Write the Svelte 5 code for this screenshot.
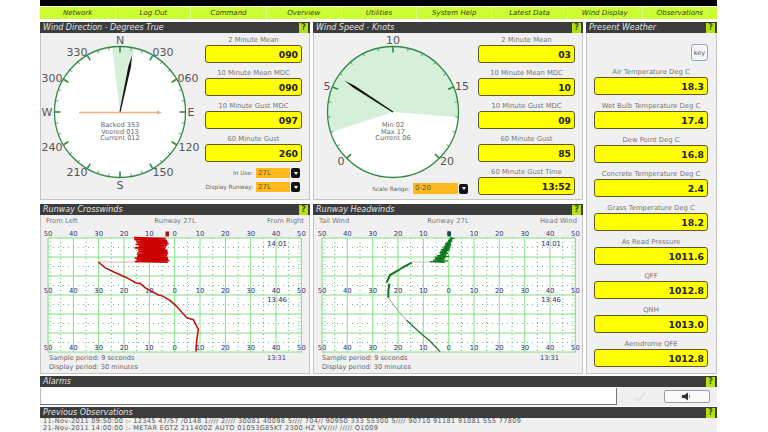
<script>
  const navItems = ['Network', 'Log Out', 'Command', 'Overview', 'Utilities', 'System Help', 'Latest Data', 'Wind Display', 'Observations'];

  const dirFields = [
    ['2 Minute Mean', '090'],
    ['10 Minute Mean MDC', '090'],
    ['10 Minute Gust MDC', '097'],
    ['60 Minute Gust', '260']
  ];
  const speedFields = [
    ['2 Minute Mean', '03'],
    ['10 Minute Mean MDC', '10'],
    ['10 Minute Gust MDC', '09'],
    ['60 Minute Gust', '85'],
    ['60 Minute Gust Time', '13:52']
  ];
  const weatherFields = [
    ['Air Temperature Deg C', '18.3'],
    ['Wet Bulb Temperature Deg C', '17.4'],
    ['Dew Point Deg C', '16.8'],
    ['Concrete Temperature Deg C', '2.4'],
    ['Grass Temperature Deg C', '18.2'],
    ['As Read Pressure', '1011.6'],
    ['QFF', '1012.8'],
    ['QNH', '1013.0'],
    ['Aerodrome QFE', '1012.8']
  ];

  // gauge centre inside its svg
  const cx = 80;
  const cy = 79;
  const radius = 65.5;

  function polar(deg, r) {
    const a = (deg * Math.PI) / 180;
    return [cx + r * Math.sin(a), cy - r * Math.cos(a)];
  }

  function sector(from, to) {
    const [x1, y1] = polar(from, radius);
    const [x2, y2] = polar(to, radius);
    const sweep = ((to - from + 360) % 360) > 180 ? 1 : 0;
    return `M${cx} ${cy}L${x1} ${y1}A${radius} ${radius} 0 ${sweep} 1 ${x2} ${y2}Z`;
  }

  function needle(deg, len) {
    const tip = polar(deg, len);
    const a = polar(deg + 90, 0.6);
    const b = polar(deg - 90, 0.6);
    const s1 = polar(deg + 1.6, len * 0.8);
    const s2 = polar(deg - 1.6, len * 0.8);
    return [a, s1, tip, s2, b].map((p) => p.join(',')).join(' ');
  }

  function tickLine(deg, major) {
    const [x1, y1] = polar(deg, radius);
    const [x2, y2] = polar(deg, radius - (major ? 6 : 3));
    return { x1, y1, x2, y2, major };
  }

  const dirTicks = Array.from({ length: 36 }, (_, i) => tickLine(i * 10, i % 3 === 0));
  const speedTicks = Array.from({ length: 21 }, (_, i) => tickLine(225 + i * 13.5, i % 5 === 0));

  const dirLabels = [
    ['N', 80, 7], ['030', 123, 19], ['060', 148, 45], ['E', 151, 79], ['120', 149, 114], ['150', 123, 139],
    ['S', 80, 152], ['210', 37, 139], ['240', 12, 114], ['W', 7, 79], ['300', 12, 45], ['330', 37, 19]
  ];
  const speedLabels = [
    ['10', 80, 7], ['15', 149, 53], ['20', 134, 128], ['0', 28, 128], ['5', 14, 53]
  ];

  // chart geometry
  const plotW = 253.4;
  const top = 11;
  const bottom = 125;
  const rows = [0, 1, 2, 3, 4, 5, 6].map((i) => top + i * 19);
  const halfRows = [0, 1, 2, 3, 4, 5].map((i) => top + 9.5 + i * 19);
  const cols = Array.from({ length: 11 }, (_, i) => (i * plotW) / 10);
  const halfCols = Array.from({ length: 10 }, (_, i) => ((i + 0.5) * plotW) / 10);
  const scale = [50, 40, 30, 20, 10, 0, 10, 20, 30, 40, 50];
  const sideTicks = Array.from({ length: 31 }, (_, i) => top + i * 3.8);

  function rnd(i) {
    const v = Math.sin(i * 12.9898) * 43758.5453;
    return v - Math.floor(v);
  }

  // traces are noted in 3x crop coordinates
  function toPlot(points, xShift) {
    return points.map(([x, y]) => `${x / 3 - xShift},${y / 3 - 26}`).join(' ');
  }

  function redBlob() {
    const pts = [];
    for (let i = 0; i < 30; i++) {
      const y = 110 + i * 2.55;
      pts.push(i % 2 ? [418 - rnd(i) * 12, y] : [312 + rnd(i) * 14, y]);
    }
    return pts;
  }

  function greenBlob() {
    const pts = [];
    for (let i = 0; i < 34; i++) {
      const t = i / 33;
      const x = 425 - t * 40;
      const y = 110 + t * 74;
      const w = 4 + t * 16 * rnd(i + 5) + t * 8;
      pts.push([x + (i % 2 ? w : -w), y]);
    }
    return pts;
  }

  const redLine = [[205, 183], [225, 200], [250, 212], [290, 230], [318, 246], [330, 247], [345, 260], [360, 268], [385, 282], [395, 284], [420, 298], [440, 316], [445, 322], [470, 350], [490, 356], [505, 385], [500, 420], [498, 452]];
  const redPale = [[205, 183], [330, 183]];
  const greenPale = [[305, 183], [365, 183]];
  const greenUpper = [[305, 185], [280, 198], [262, 210], [240, 222], [230, 245]];
  const greenMid = [[238, 248], [235, 270], [235, 290]];
  const greenPaleLower = [[235, 290], [265, 330], [290, 358]];
  const greenLower = [[290, 358], [330, 395], [360, 420], [390, 452]];
</script>

{#snippet field(label, value)}
  <div class="field">
    <div class="field-label">{label}</div>
    <div class="field-box">{value}</div>
  </div>
{/snippet}

{#snippet titleBar(title)}
  <div class="title-bar">
    <span>{title}</span>
    <span class="help">?</span>
  </div>
{/snippet}

{#snippet picker(label, value, wide)}
  <div class="picker">
    <span>{label}</span>
    <span class="picker-value" class:wide>{value}</span>
    <span class="picker-btn"><i></i></span>
  </div>
{/snippet}

{#snippet trace(x0)}
  {#if x0 === 8}
    <polyline points={toPlot(redPale, 10)} class="trace" stroke="#e89a9a" stroke-width="0.8" />
    <polyline points={toPlot(redBlob(), 10)} class="trace" stroke="#cc0000" stroke-width="1.6" />
    <polyline points={toPlot(redLine, 10)} class="trace" stroke="#b81414" stroke-width="1.6" />
    <rect x="125.5" y="4.5" width="3.5" height="5" fill="#a01818" />
  {:else}
    <polyline points={toPlot(greenPale, 3)} class="trace" stroke="#a8b8a8" stroke-width="0.8" />
    <polyline points={toPlot(greenBlob(), 3)} class="trace" stroke="#0c7a1c" stroke-width="1.4" />
    <polyline points={toPlot(greenUpper, 3)} class="trace" stroke="#0c7a1c" stroke-width="2" />
    <polyline points={toPlot(greenMid, 3)} class="trace" stroke="#0c7a1c" stroke-width="2" />
    <polyline points={toPlot(greenPaleLower, 3)} class="trace" stroke="#7f9f7f" stroke-width="0.9" />
    <polyline points={toPlot(greenLower, 3)} class="trace" stroke="#1a7a2a" stroke-width="1.3" />
    <rect x="134.5" y="4.5" width="3.5" height="5" fill="#14505a" />
  {/if}
{/snippet}

{#snippet chart(left, mid, right, x0)}
  <div class="chart-head">
    <span>{left}</span><span>{mid}</span><span class="head-right">{right}</span>
  </div>
  <svg class="chart" width="270" height="126" viewBox="0 0 270 126">
    <g transform="translate({x0} 0)">
      <rect x="0" y={top} width={plotW} height={bottom - top} fill="#fff" />
      {#each halfRows as y}
        <line x1="0" x2={plotW} y1={y} y2={y} class="dotted" />
      {/each}
      {#each halfCols as x}
        <line x1={x} x2={x} y1={top} y2={bottom} class="dashed" />
      {/each}
      {#each rows as y}
        <line x1="0" x2={plotW} y1={y} y2={y} class="solid" />
      {/each}
      {#each cols as x}
        <line x1={x} x2={x} y1={top} y2={bottom} class="solid" />
      {/each}
      {#each sideTicks as y}
        <line x1="0" x2="4" y1={y} y2={y} class="tick" />
        <line x1={plotW - 4} x2={plotW} y1={y} y2={y} class="tick" />
      {/each}
      {#each scale as n, i}
        <text x={cols[i]} y="9" class="scale">{n}</text>
        <text x={cols[i]} y="66" class="scale">{n}</text>
        <text x={cols[i]} y="123" class="scale">{n}</text>
      {/each}
      <text x="229" y="19" class="scale">14:01</text>
      <text x="229" y="75" class="scale">13:46</text>
    </g>
    {@render trace(x0)}
  </svg>
  <div class="chart-foot">
    <div>Sample period: 9 seconds<br />Display period: 30 minutes</div>
    <div class="foot-time">13:31</div>
  </div>
{/snippet}

{#snippet gaugeFace(ticks, labels, sectorPath, needleDeg, lines)}
  <circle cx={cx} cy={cy} r={radius} fill="#fff" />
  <path d={sectorPath} fill="#d6efd8" />
  <circle cx={cx} cy={cy} r={radius} fill="none" stroke="#2f8a45" stroke-width="1.3" />
  {#each ticks as t}
    <line x1={t.x1} y1={t.y1} x2={t.x2} y2={t.y2} stroke="#2f8a45" stroke-width={t.major ? 1.6 : 0.8} />
  {/each}
  {#each labels as [text, x, y]}
    <text x={x} y={y + 4} class="dial">{text}</text>
  {/each}
  {#each lines as line, i}
    <text x={cx} y={cy + 15 + i * 6.6} class="dial-info">{line}</text>
  {/each}
  <polygon points={needle(needleDeg, 58)} fill="#141414" />
{/snippet}

<div class="app">
  <div class="top-bar"></div>
  <nav class="nav">
    {#each navItems as item}
      <span>{item}</span>
    {/each}
  </nav>

  <div class="grid">
    <section class="panel">
      {@render titleBar('Wind Direction - Degrees True')}
      <div class="gauge-body">
        <div class="gauge-col">
          <svg width="165" height="168" viewBox="0 0 165 168">
            {@render gaugeFace(dirTicks, dirLabels, sector(353, 13), 12, ['Backed 353', 'Veered 013', 'Current 012'])}
            <line x1={cx - 41} x2={cx + 38} y1={cy + 0.5} y2={cy + 0.5} stroke="#f0b27c" stroke-width="1.5" />
            <polygon points="{cx + 37},{cy - 1.6} {cx + 42},{cy + 0.5} {cx + 37},{cy + 2.6}" fill="#f0b27c" />
          </svg>
        </div>
        <div class="field-col">
          {#each dirFields as [label, value]}
            {@render field(label, value)}
          {/each}
          <div class="pickers">
            {@render picker('In Use:', '27L', false)}
            {@render picker('Display Runway:', '27L', false)}
          </div>
        </div>
      </div>
    </section>

    <section class="panel">
      {@render titleBar('Wind Speed - Knots')}
      <div class="gauge-body">
        <div class="gauge-col">
          <svg width="165" height="149" viewBox="0 0 165 149">
            {@render gaugeFace(speedTicks, speedLabels, sector(252, 94.5), 303, ['Min 02', 'Max 17', 'Current 06'])}
          </svg>
          <div class="scale-range">
            {@render picker('Scale Range:', '0-20', true)}
          </div>
        </div>
        <div class="field-col">
          {#each speedFields as [label, value]}
            {@render field(label, value)}
          {/each}
        </div>
      </div>
    </section>

    <section class="panel weather">
      {@render titleBar('Present Weather')}
      <div class="weather-body">
        <button class="key" type="button">key</button>
        {#each weatherFields as [label, value]}
          {@render field(label, value)}
        {/each}
      </div>
    </section>

    <section class="panel">
      {@render titleBar('Runway Crosswinds')}
      {@render chart('From Left', 'Runway 27L', 'From Right', 8)}
    </section>

    <section class="panel">
      {@render titleBar('Runway Headwinds')}
      {@render chart('Tail Wind', 'Runway 27L', 'Head Wind', 9)}
    </section>
  </div>

  <section class="alarms">
    {@render titleBar('Alarms')}
    <div class="alarm-row">
      <div class="alarm-box"></div>
      <svg class="check" width="14" height="10" viewBox="0 0 14 10">
        <path d="M2 6l3 3 7-8" fill="none" stroke="#e2e2e2" stroke-width="2" />
      </svg>
      <button class="mute" type="button" aria-label="Mute">
        <svg width="12" height="9" viewBox="0 0 12 9">
          <path d="M1 3h2.5L7 .5v8L3.5 6H1z" fill="#333" />
          <path d="M8.5 3v3" stroke="#888" stroke-width="1" />
        </svg>
      </button>
    </div>
  </section>

  <section class="obs">
    {@render titleBar('Previous Observations')}
    <div class="obs-body">
      <div>11-Nov-2011 09:50:00 :- 12345 47/57 /0148 1//// 2//// 30081 40098 5//// 704// 90950 333 55300 5//// 90710 91181 91081 555 77809</div>
      <div>21-Nov-2011 14:00:00 :- METAR EGTZ 211400Z AUTO 01053G85KT 2300 HZ VV//// ///// Q1009</div>
    </div>
  </section>
</div>

<style>
  :global(body) {
    margin: 0;
    background: #fff;
  }

  .app {
    width: 677px;
    height: 432px;
    margin-left: 40px;
    overflow: hidden;
    font-family: "DejaVu Sans", Verdana, sans-serif;
    color: #666;
  }

  .top-bar {
    height: 6px;
    background: #000;
  }

  .nav {
    display: grid;
    grid-template-columns: repeat(9, 1fr);
    height: 12px;
    margin-top: 1px;
    background: #ccff33;
  }

  .nav span {
    border-left: 1px solid #dcff80;
    font-size: 7px;
    font-style: italic;
    line-height: 12px;
    text-align: center;
    color: #334010;
  }

  .nav span:first-child {
    border-left: 0;
  }

  .grid {
    display: grid;
    grid-template-columns: 270px 270px 131px;
    grid-template-rows: 178px 170px;
    column-gap: 3px;
    row-gap: 4px;
    margin-top: 3px;
  }

  .panel {
    box-sizing: border-box;
    display: flex;
    flex-direction: column;
    background: #f0f0f0;
    box-shadow: inset 0 0 0 1px #c4c4c4;
    overflow: hidden;
  }

  .weather {
    grid-column: 3;
    grid-row: 1 / span 2;
  }

  .title-bar {
    flex: none;
    display: flex;
    align-items: center;
    justify-content: space-between;
    height: 11px;
    padding: 0 2px 0 3px;
    background: #3c3c3c;
    color: #e4e4e4;
    font-size: 8px;
    font-style: italic;
  }

  .help {
    width: 9px;
    height: 10px;
    background: #b4e014;
    color: #3c5000;
    font-size: 8px;
    font-weight: bold;
    font-style: normal;
    line-height: 10px;
    text-align: center;
  }

  .gauge-body {
    display: flex;
    flex: 1;
  }

  .gauge-col {
    width: 165px;
    flex: none;
  }

  .gauge-col svg {
    display: block;
  }

  .field-col {
    width: 97px;
    padding-top: 2px;
  }

  .field {
    margin-bottom: 5px;
  }

  .field-label {
    height: 10px;
    font-size: 6.8px;
    line-height: 10px;
    text-align: center;
    white-space: nowrap;
    color: #777;
  }

  .field-box {
    box-sizing: border-box;
    height: 18px;
    padding-right: 3px;
    background: #ffff00;
    border: 1.5px solid #5c5a28;
    border-radius: 3px;
    color: #222;
    font-size: 9.2px;
    font-weight: bold;
    line-height: 17px;
    text-align: right;
  }

  .pickers {
    display: flex;
    flex-direction: column;
    gap: 4px;
    margin-top: 6px;
  }

  .picker {
    display: flex;
    align-items: center;
    justify-content: flex-end;
    gap: 3px;
    font-size: 5.8px;
    color: #666;
  }

  .picker-value {
    box-sizing: border-box;
    width: 34px;
    height: 10px;
    padding-left: 2px;
    background: #ffb81c;
    color: #555;
    font-size: 7px;
    line-height: 11px;
  }

  .picker-value.wide {
    width: 45px;
    height: 11px;
  }

  .picker-btn {
    display: flex;
    align-items: center;
    justify-content: center;
    width: 9px;
    height: 10px;
    margin-left: -2px;
    margin-right: 2px;
    background: #111;
    border-radius: 2px;
  }

  .picker-btn i {
    width: 0;
    height: 0;
    border-left: 2.5px solid transparent;
    border-right: 2.5px solid transparent;
    border-top: 3px solid #fff;
  }

  .scale-range {
    margin-top: 1px;
    padding-right: 8px;
  }

  .dial {
    font-size: 11px;
    text-anchor: middle;
    fill: #555;
  }

  .dial-info {
    font-size: 6.6px;
    text-anchor: middle;
    fill: #666;
  }

  .weather-body {
    display: flex;
    flex: 1;
    flex-direction: column;
    padding: 0 9px 0 8px;
  }

  .key {
    align-self: flex-end;
    box-sizing: border-box;
    width: 17px;
    height: 17px;
    margin-top: 11px;
    margin-bottom: 6px;
    padding: 0;
    background: #f4f6fa;
    border: 1px solid #9aa4b4;
    border-radius: 3px;
    color: #555;
    font-family: inherit;
    font-size: 6.5px;
  }

  .weather-body .field {
    margin-bottom: 6px;
  }

  .chart-head {
    display: grid;
    flex: none;
    grid-template-columns: 1fr auto 1fr;
    height: 12px;
    padding: 0 6px;
    font-size: 6.8px;
    line-height: 12px;
    color: #777;
  }

  .head-right {
    text-align: right;
  }

  .chart {
    display: block;
    flex: none;
  }

  .scale {
    font-size: 6.8px;
    text-anchor: middle;
    fill: #33337a;
    stroke: #f4f4f4;
    stroke-width: 0.6px;
    paint-order: stroke;
  }

  .solid {
    stroke: #84e084;
    stroke-width: 1;
  }

  .dashed {
    stroke: #58b868;
    stroke-width: 1;
    stroke-dasharray: 1 3;
  }

  .dotted {
    stroke: #6cc47c;
    stroke-width: 1;
    stroke-dasharray: 1 4;
  }

  .tick {
    stroke: #84e084;
    stroke-width: 0.6;
  }

  .trace {
    fill: none;
  }

  .chart-foot {
    display: flex;
    justify-content: space-between;
    padding: 1px 24px 0 9px;
    font-size: 6.6px;
    line-height: 9px;
    color: #666;
  }

  .foot-time {
    color: #33337a;
  }

  .alarms {
    margin-top: 2px;
  }

  .alarm-row {
    display: flex;
    align-items: center;
    height: 19px;
    background: #f0f0f0;
  }

  .alarm-box {
    box-sizing: border-box;
    width: 577px;
    height: 17px;
    background: #fff;
    border-right: 1px solid #777;
    border-bottom: 1px solid #777;
    box-shadow: inset 1px 0 0 #bbb;
  }

  .check {
    margin-left: 16px;
  }

  .mute {
    display: flex;
    align-items: center;
    justify-content: center;
    box-sizing: border-box;
    width: 46px;
    height: 13px;
    margin-left: 17px;
    padding: 0;
    background: #fafafa;
    border: 1px solid #98a0ac;
    border-radius: 2px;
  }

  .obs {
    margin-top: 1px;
  }

  .obs-body {
    height: 14px;
    padding-left: 3px;
    overflow: hidden;
    background: #f0f0f0;
    font-size: 6.6px;
    letter-spacing: 0.3px;
    line-height: 7px;
    white-space: nowrap;
    color: #555;
  }
</style>
